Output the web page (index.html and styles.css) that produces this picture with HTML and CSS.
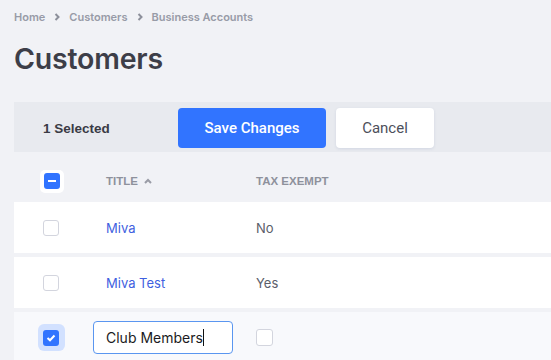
FILE: index.html
```html
<!DOCTYPE html>
<html lang="en">
<head>
    <meta charset="UTF-8">
    <title>Customers</title>
    <link rel="stylesheet" href="styles.css">
</head>
<body>
    <!-- Breadcrumb -->
    <nav class="crumbs">
        <span>Home</span>
        <svg class="crumb-sep" width="6" height="8" viewBox="0 0 6 8"><polyline points="1.5,1 4.5,4 1.5,7" fill="none" stroke="#8d909b" stroke-width="2"/></svg>
        <span>Customers</span>
        <svg class="crumb-sep" width="6" height="8" viewBox="0 0 6 8"><polyline points="1.5,1 4.5,4 1.5,7" fill="none" stroke="#8d909b" stroke-width="2"/></svg>
        <span>Business Accounts</span>
    </nav>

    <h1 class="page-title">Customers</h1>

    <!-- Barra de ações -->
    <div class="toolbar">
        <span class="selected-count">1 Selected</span>
        <button class="save-button">Save Changes</button>
        <button class="cancel-button">Cancel</button>
    </div>

    <!-- Tabela -->
    <div class="table">
        <div class="row head">
            <div class="cell check">
                <span class="check-wrap">
                    <span class="box on"><span class="minus"></span></span>
                </span>
            </div>
            <div class="cell title">TITLE
                <svg class="sort" width="8" height="6" viewBox="0 0 8 6"><polyline points="1,5 4,2 7,5" fill="none" stroke="#9a9ca6" stroke-width="2"/></svg>
            </div>
            <div class="cell">TAX EXEMPT</div>
        </div>

        <div class="row">
            <div class="cell check"><span class="box"></span></div>
            <div class="cell title"><a class="link">Miva</a></div>
            <div class="cell value">No</div>
        </div>

        <div class="row">
            <div class="cell check"><span class="box"></span></div>
            <div class="cell title"><a class="link">Miva Test</a></div>
            <div class="cell value">Yes</div>
        </div>

        <div class="row editing">
            <div class="cell check">
                <span class="halo">
                    <span class="box on">
                        <svg width="10" height="8" viewBox="0 0 10 8"><polyline points="1.5,4 4,6.3 8.5,1.5" fill="none" stroke="#fff" stroke-width="2"/></svg>
                    </span>
                </span>
            </div>
            <div class="cell title">
                <div class="text-input">Club Members<span class="caret"></span></div>
            </div>
            <div class="cell"><span class="box big"></span></div>
        </div>
    </div>
</body>
</html>
```

FILE: styles.css
```css
body {
    margin: 0;
    padding: 0 0 0 14px;
    background: #f1f2f6;
    font-family: 'Inter', 'Liberation Sans', sans-serif;
    color: #3c3d47;
    overflow: hidden;
}

.crumbs {
    display: flex;
    align-items: center;
    gap: 8px;
    height: 34px;
    font-size: 11px;
    font-weight: 600;
    color: #989ba7;
}

.crumb-sep {
    margin: 0 1px;
}

.page-title {
    margin: 7px 0 0;
    height: 61px;
    font-size: 28.5px;
    font-weight: 600;
    letter-spacing: -0.2px;
    color: #3d3e48;
}

.toolbar {
    display: flex;
    align-items: center;
    height: 50px;
    padding: 2px 0 0 29px;
    box-sizing: border-box;
    background: #e8eaef;
}

.selected-count {
    width: 135px;
    font-family: 'Liberation Sans', sans-serif;
    font-size: 13.5px;
    font-weight: 700;
    color: #3a3b45;
}

button {
    height: 40px;
    border: none;
    border-radius: 4px;
    font-family: 'Roboto', 'Liberation Sans', sans-serif;
    font-size: 15px;
    font-weight: 500;
    cursor: pointer;
}

.save-button {
    width: 148px;
    background: #3174ff;
    color: #fff;
}

.cancel-button {
    width: 98px;
    margin-left: 10px;
    background: #fff;
    color: #4d4f5b;
    font-weight: 400;
    box-shadow: 0 1px 3px rgba(60, 80, 140, 0.12);
}

.table {
    display: flex;
    flex-direction: column;
    gap: 4px;
}

.row {
    display: grid;
    grid-template-columns: 74px 168px 1fr;
    align-items: center;
    height: 51px;
    background: #fff;
    font-size: 13px;
}

.row.head {
    height: 42px;
    margin: 8px 0 -4px;
    background: transparent;
    font-family: 'Liberation Sans', sans-serif;
    font-size: 11.5px;
    font-weight: 700;
    color: #8e919c;
}

.row.editing {
    background: #f8f9fc;
}

.cell {
    display: flex;
    align-items: center;
}

.cell.check {
    justify-content: center;
}

.cell.title {
    padding-left: 18px;
}

.row.editing .cell.title {
    padding-left: 5px;
}

.sort {
    margin-left: 6px;
}

.link {
    color: #3f5fe0;
}

.value {
    color: #5b5e6a;
}

.box {
    display: flex;
    align-items: center;
    justify-content: center;
    width: 16px;
    height: 16px;
    box-sizing: border-box;
    border: 1px solid #d3d5de;
    border-radius: 3px;
    background: #fff;
}

.box.on {
    border: none;
    background: #3174ff;
}

.box.big {
    width: 17px;
    height: 17px;
}

.check-wrap {
    display: flex;
    align-items: center;
    justify-content: center;
    width: 24px;
    height: 23px;
    margin-left: 1px;
    border-radius: 5px;
    background: #fff;
}

.minus {
    width: 8px;
    height: 2px;
    background: #fff;
}

.halo {
    display: flex;
    align-items: center;
    justify-content: center;
    width: 27px;
    height: 27px;
    border-radius: 6px;
    background: #d2e1ff;
}

.text-input {
    display: flex;
    align-items: center;
    width: 140px;
    height: 33px;
    box-sizing: border-box;
    padding-left: 12px;
    border: 1px solid #5a96f0;
    border-radius: 4px;
    background: #fff;
    font-size: 14px;
    color: #1b1b22;
}

.caret {
    width: 1px;
    height: 17px;
    background: #111;
}
```
